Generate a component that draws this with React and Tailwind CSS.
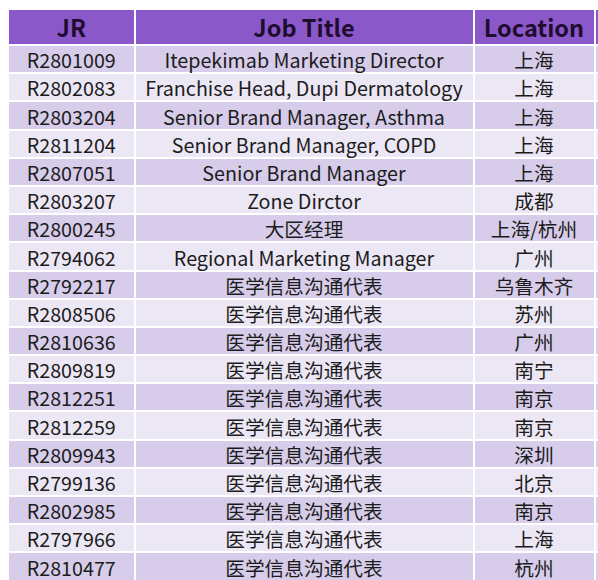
const rows = [
  ["R2801009", "Itepekimab Marketing Director", "上海"],
  ["R2802083", "Franchise Head, Dupi Dermatology", "上海"],
  ["R2803204", "Senior Brand Manager, Asthma", "上海"],
  ["R2811204", "Senior Brand Manager, COPD", "上海"],
  ["R2807051", "Senior Brand Manager", "上海"],
  ["R2803207", "Zone Dirctor", "成都"],
  ["R2800245", "大区经理", "上海/杭州"],
  ["R2794062", "Regional Marketing Manager", "广州"],
  ["R2792217", "医学信息沟通代表", "乌鲁木齐"],
  ["R2808506", "医学信息沟通代表", "苏州"],
  ["R2810636", "医学信息沟通代表", "广州"],
  ["R2809819", "医学信息沟通代表", "南宁"],
  ["R2812251", "医学信息沟通代表", "南京"],
  ["R2812259", "医学信息沟通代表", "南京"],
  ["R2809943", "医学信息沟通代表", "深圳"],
  ["R2799136", "医学信息沟通代表", "北京"],
  ["R2802985", "医学信息沟通代表", "南京"],
  ["R2797966", "医学信息沟通代表", "上海"],
  ["R2810477", "医学信息沟通代表", "杭州"],
];

export default function App() {
  return (
    <div
      className="w-[598px] h-[580px] overflow-hidden bg-white pl-[9px] pt-[10px]"
      style={{ fontFamily: '"Noto Sans CJK SC", "Noto Sans", sans-serif' }}
    >
      <div className="grid grid-cols-[124.5px_337px_119px_40px] gap-[2px] w-[630px] text-[19.7px] leading-none text-[#1c1c1c]">
        {["JR", "Job Title", "Location", ""].map((h) => (
          <div
            key={h}
            className="h-[34px] pt-[1px] flex items-center justify-center bg-[#8b58c9] text-[23.5px] font-bold text-[#1e0d2e]"
          >
            {h}
          </div>
        ))}
        {rows.map((r, i) => {
          const bg = i % 2 === 0 ? "bg-[#d7cdea]" : "bg-[#ece7f4]";
          return [...r, ""].map((c, j) => (
            <div
              key={i + "-" + j}
              className={`h-[26.2px] pt-[2px] flex items-center justify-center ${bg}`}
            >
              {c}
            </div>
          ));
        })}
      </div>
    </div>
  );
}
